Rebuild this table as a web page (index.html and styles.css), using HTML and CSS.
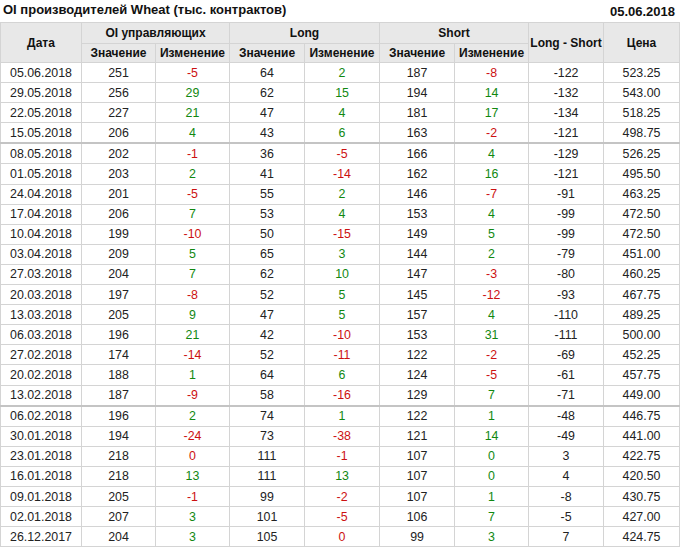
FILE: index.html
```html
<!DOCTYPE html>
<html lang="ru">
<head>
<meta charset="utf-8">
<title>OI производителей Wheat</title>
<link rel="stylesheet" href="styles.css">
</head>
<body>
<div class="page">
  <div class="titlebar">
    <span class="title">OI производителей Wheat (тыс. контрактов)</span>
    <span class="date">05.06.2018</span>
  </div>
  <table class="grid">
    <colgroup>
      <col class="c-date"><col class="c74"><col class="c74"><col class="c75"><col class="c75"><col class="c75"><col class="c74"><col class="c75"><col class="c76">
    </colgroup>
    <thead>
      <tr class="h1">
        <th rowspan="2">Дата</th>
        <th colspan="2">OI управляющих</th>
        <th colspan="2">Long</th>
        <th colspan="2">Short</th>
        <th rowspan="2">Long - Short</th>
        <th rowspan="2">Цена</th>
      </tr>
      <tr class="h2">
        <th>Значение</th><th>Изменение</th>
        <th>Значение</th><th>Изменение</th>
        <th>Значение</th><th>Изменение</th>
      </tr>
    </thead>
    <tbody>
      <tr><td>05.06.2018</td><td>251</td><td class="d">-5</td><td>64</td><td class="u">2</td><td>187</td><td class="d">-8</td><td>-122</td><td>523.25</td></tr>
      <tr><td>29.05.2018</td><td>256</td><td class="u">29</td><td>62</td><td class="u">15</td><td>194</td><td class="u">14</td><td>-132</td><td>543.00</td></tr>
      <tr><td>22.05.2018</td><td>227</td><td class="u">21</td><td>47</td><td class="u">4</td><td>181</td><td class="u">17</td><td>-134</td><td>518.25</td></tr>
      <tr><td>15.05.2018</td><td>206</td><td class="u">4</td><td>43</td><td class="u">6</td><td>163</td><td class="d">-2</td><td>-121</td><td>498.75</td></tr>
      <tr class="sep"><td>08.05.2018</td><td>202</td><td class="d">-1</td><td>36</td><td class="d">-5</td><td>166</td><td class="u">4</td><td>-129</td><td>526.25</td></tr>
      <tr><td>01.05.2018</td><td>203</td><td class="u">2</td><td>41</td><td class="d">-14</td><td>162</td><td class="u">16</td><td>-121</td><td>495.50</td></tr>
      <tr><td>24.04.2018</td><td>201</td><td class="d">-5</td><td>55</td><td class="u">2</td><td>146</td><td class="d">-7</td><td>-91</td><td>463.25</td></tr>
      <tr><td>17.04.2018</td><td>206</td><td class="u">7</td><td>53</td><td class="u">4</td><td>153</td><td class="u">4</td><td>-99</td><td>472.50</td></tr>
      <tr><td>10.04.2018</td><td>199</td><td class="d">-10</td><td>50</td><td class="d">-15</td><td>149</td><td class="u">5</td><td>-99</td><td>472.50</td></tr>
      <tr><td>03.04.2018</td><td>209</td><td class="u">5</td><td>65</td><td class="u">3</td><td>144</td><td class="u">2</td><td>-79</td><td>451.00</td></tr>
      <tr><td>27.03.2018</td><td>204</td><td class="u">7</td><td>62</td><td class="u">10</td><td>147</td><td class="d">-3</td><td>-80</td><td>460.25</td></tr>
      <tr><td>20.03.2018</td><td>197</td><td class="d">-8</td><td>52</td><td class="u">5</td><td>145</td><td class="d">-12</td><td>-93</td><td>467.75</td></tr>
      <tr><td>13.03.2018</td><td>205</td><td class="u">9</td><td>47</td><td class="u">5</td><td>157</td><td class="u">4</td><td>-110</td><td>489.25</td></tr>
      <tr><td>06.03.2018</td><td>196</td><td class="u">21</td><td>42</td><td class="d">-10</td><td>153</td><td class="u">31</td><td>-111</td><td>500.00</td></tr>
      <tr><td>27.02.2018</td><td>174</td><td class="d">-14</td><td>52</td><td class="d">-11</td><td>122</td><td class="d">-2</td><td>-69</td><td>452.25</td></tr>
      <tr><td>20.02.2018</td><td>188</td><td class="u">1</td><td>64</td><td class="u">6</td><td>124</td><td class="d">-5</td><td>-61</td><td>457.75</td></tr>
      <tr><td>13.02.2018</td><td>187</td><td class="d">-9</td><td>58</td><td class="d">-16</td><td>129</td><td class="u">7</td><td>-71</td><td>449.00</td></tr>
      <tr class="sep"><td>06.02.2018</td><td>196</td><td class="u">2</td><td>74</td><td class="u">1</td><td>122</td><td class="u">1</td><td>-48</td><td>446.75</td></tr>
      <tr><td>30.01.2018</td><td>194</td><td class="d">-24</td><td>73</td><td class="d">-38</td><td>121</td><td class="u">14</td><td>-49</td><td>441.00</td></tr>
      <tr><td>23.01.2018</td><td>218</td><td class="d">0</td><td>111</td><td class="d">-1</td><td>107</td><td class="u">0</td><td>3</td><td>422.75</td></tr>
      <tr><td>16.01.2018</td><td>218</td><td class="u">13</td><td>111</td><td class="u">13</td><td>107</td><td class="u">0</td><td>4</td><td>420.50</td></tr>
      <tr><td>09.01.2018</td><td>205</td><td class="d">-1</td><td>99</td><td class="d">-2</td><td>107</td><td class="u">1</td><td>-8</td><td>430.75</td></tr>
      <tr><td>02.01.2018</td><td>207</td><td class="u">3</td><td>101</td><td class="d">-5</td><td>106</td><td class="u">7</td><td>-5</td><td>427.00</td></tr>
      <tr><td>26.12.2017</td><td>204</td><td class="u">3</td><td>105</td><td class="d">0</td><td>99</td><td class="u">3</td><td>7</td><td>424.75</td></tr>
    </tbody>
  </table>
</div>
</body>
</html>
```
FILE: styles.css
```css
html, body {
  margin: 0;
  padding: 0;
  background: #ffffff;
}
body {
  font-family: "Liberation Sans", Arial, sans-serif;
  color: #222222;
}
.page {
  width: 680px;
}
.titlebar {
  display: flex;
  justify-content: space-between;
  align-items: center;
  height: 22px;
  padding: 0 5px 0 3px;
  box-sizing: border-box;
  font-weight: bold;
  font-size: 13px;
  color: #111111;
}
.titlebar .title { position: relative; top: -2px; }
.grid {
  border-collapse: collapse;
  table-layout: fixed;
  width: 680px;
  font-size: 12.4px;
}
.c-date { width: 81px; }
.c74 { width: 74px; }
.c75 { width: 75px; }
.c76 { width: 76px; }
.grid th, .grid td {
  border: 1px solid #d4d4d4;
  padding: 0;
  text-align: center;
  white-space: nowrap;
  overflow: hidden;
}
.grid th {
  background: #e8e8e8;
  font-weight: bold;
  font-size: 12px;
  color: #111111;
}
.grid tr.h1 th { height: 19.5px; }
.grid tr.h2 th { height: 18.5px; }
.grid td {
  height: 19.1px;
  color: #222222;
}
.grid tr.sep td {
  border-top: 2px solid #c4c4c4;
}
.grid td.u { color: #118811; }
.grid td.d { color: #cc1111; }
```
